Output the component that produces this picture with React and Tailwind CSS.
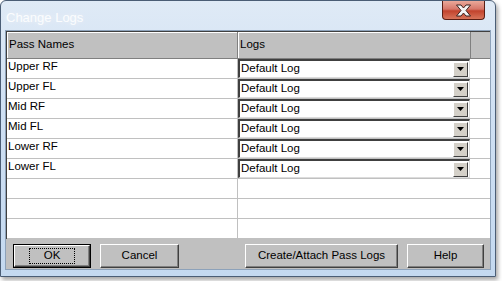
import React from 'react';

const passes = ['Upper RF', 'Upper FL', 'Mid RF', 'Mid FL', 'Lower RF', 'Lower FL'];

const Combo = () => (
    <div className="flex items-center h-[19px] w-[232px] bg-white border-t-2 border-l-2 border-[#404040] border-r border-b border-r-[#dcdcdc] border-b-[#dcdcdc]">
        <span className="flex-1 pl-[1px] leading-none">Default Log</span>
        <div className="flex items-center justify-center w-[15px] h-[15px] mr-[1px] bg-[#d4d0c8] border border-t-white border-l-white border-r-[#404040] border-b-[#404040]">
            <svg width="7" height="4" viewBox="0 0 7 4">
                <path d="M0 0h7L3.5 4z" fill="#000" />
            </svg>
        </div>
    </div>
);

const Button = ({ label, width, focused }) => (
    <div className={`h-[24px] ${width} ${focused ? 'border border-black' : ''}`}>
        <div className="h-full flex items-center justify-center bg-[#c0c0c0] border border-t-white border-l-white border-r-[#404040] border-b-[#404040] shadow-[inset_-1px_-1px_0_#808080]">
            <span className={focused ? 'px-[14px] py-[1px] border border-dotted border-black leading-none' : 'leading-none'}>{label}</span>
        </div>
    </div>
);

export default function App() {
    return (
        <div className="w-[502px] h-[281px] bg-white relative font-['Liberation_Sans',Arial,sans-serif] text-[11.5px] text-black">
            <div className="w-[496px] h-[277px] flex flex-col rounded-t-[6px] border border-[#4a5d75] bg-[linear-gradient(180deg,#dfeaf6_0%,#cfe0f3_40%,#c4d9f0_100%)] shadow-[2px_3px_4px_rgba(0,0,0,0.35)]">
                <div className="h-[29px] flex items-start justify-between pl-[5px] pr-[10px]">
                    <span className="mt-[7px] text-white text-[13px] [text-shadow:0_0_6px_rgba(255,255,255,0.9)] opacity-90">Change Logs</span>
                    <div className="w-[43px] h-[19px] rounded-b-[4px] border border-[#5a1e14] border-t-0 bg-[linear-gradient(180deg,#eaa99a_0%,#d6776a_45%,#c2432d_55%,#d8745a_100%)] flex items-center justify-center">
                        <svg width="19" height="13" viewBox="0 0 19 13">
                            <path d="M2.5 1h4.5l2.5 3 2.5-3h4.5l-4.5 5.5 4.5 5.5h-4.5l-2.5-3-2.5 3H2.5l4.5-5.5z" fill="#f4f4f4" stroke="#3b2320" strokeWidth="1" strokeLinejoin="round" />
                        </svg>
                    </div>
                </div>
                <div className="mx-[4px] mb-[6px] flex-1 flex flex-col bg-[#c0c0c0] border border-[#8da2ba]">
                    <div className="flex flex-col border-t border-l border-[#404040] bg-white">
                        <div className="flex h-[27px] bg-[#c0c0c0] border-b border-[#808080]">
                            <div className="w-[231px] pl-[2px] pt-[4px] border-r border-[#808080] shadow-[inset_1px_1px_0_#fff]">Pass Names</div>
                            <div className="w-[233px] pl-[2px] pt-[4px] border-r border-[#808080] shadow-[inset_1px_1px_0_#fff]">Logs</div>
                            <div className="flex-1" />
                        </div>
                        {passes.map((p) => (
                            <div key={p} className="flex h-[20px] border-b border-[#c0c0c0]">
                                <div className="w-[231px] pl-[1px] leading-none pt-[2px] border-r border-[#c0c0c0]">{p}</div>
                                <Combo />
                            </div>
                        ))}
                        {[0, 1, 2].map((i) => (
                            <div key={i} className="flex h-[20px] border-b border-[#c0c0c0]">
                                <div className="w-[231px] border-r border-[#c0c0c0]" />
                            </div>
                        ))}
                    </div>
                    <div className="flex items-center pl-[7px] pr-[5px] pt-[5px]">
                        <Button label="OK" width="w-[78px]" focused />
                        <div className="ml-[9px]"><Button label="Cancel" width="w-[79px]" /></div>
                        <div className="ml-[66px]"><Button label="Create/Attach Pass Logs" width="w-[153px]" /></div>
                        <div className="ml-[9px]"><Button label="Help" width="w-[77px]" /></div>
                    </div>
                </div>
            </div>
        </div>
    );
}
